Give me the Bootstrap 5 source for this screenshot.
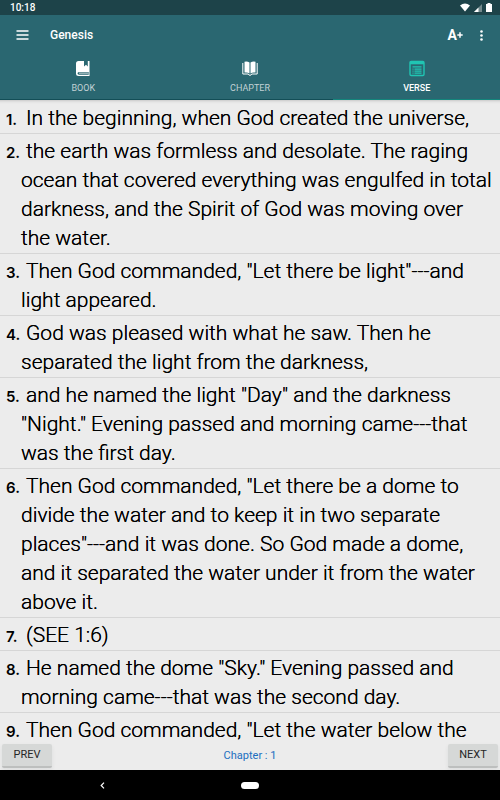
<!DOCTYPE html>
<html lang="en">
<head>
<meta charset="utf-8">
<meta name="viewport" content="width=device-width, initial-scale=1">
<title>Genesis</title>
<link href="https://cdn.jsdelivr.net/npm/bootstrap@5.3.0/dist/css/bootstrap.min.css" rel="stylesheet">
<style>
body { font-family: Roboto, sans-serif; background: #ececec; color: #000; }
svg { display: block; }
.status { height: 15px; background: #1d4349; font-size: 10px; line-height: 15px; padding: 0 8px 0 10px; }
.appbar { height: 40px; background: #2a6771; padding: 0 16px; }
.title { font-size: 12px; line-height: 16px; font-weight: 500; margin-left: 21px; }
.bigger { font-size: 14px; line-height: 16px; }
.tabs { background: #2a6771; }
.tab { height: 45px; padding: 5px 0 0; font-size: 9px; line-height: 12px; color: #c3d2d5; border-bottom: 1px solid #134e57; }
.tab svg { margin-bottom: 5px; }
.tab.active { color: #fff; font-weight: 500; border-color: #14857c; }
.verses { min-height: 0; padding-top: 1px; box-shadow: inset 0 4px 3px -3px #c4c4c4; }
.verse { font-size: 21px; font-weight: 300; line-height: 29px; text-shadow: 0 0 0 #000; padding: 3px 8px 0 21px; text-indent: -15px; border-bottom: 1px solid #d6d6d6; }
.verse:last-child { border: 0; }
.num { display: inline-block; width: 20px; text-indent: 0; text-shadow: none; font-family: Inter, sans-serif; font-size: 15px; line-height: 16px; font-weight: 600; }
.pager { height: 28px; padding: 2px 2px 2px; font-size: 11px; line-height: 16px; background: #ececec; }
.pagebtn { width: 50px; height: 24px; font-size: 11px; line-height: 16px; background: #d6d8d7; color: #262626; border: 0; border-bottom: 2px solid #bdbfbe; border-radius: 2px; }
.chapter { color: #1c6fc0; }
.sysnav { height: 30px; background: #000; }
.back { margin-right: 4px; }
.pill { width: 18px; height: 7px; background: #fff; }
</style>
<script src="https://cdn.jsdelivr.net/npm/bootstrap@5.3.0/dist/js/bootstrap.bundle.min.js"></script>
</head>
<body class="d-flex flex-column vh-100 overflow-hidden">
<div class="status d-flex justify-content-between align-items-center text-white flex-shrink-0">
  <span class="fw-medium">10:18</span>
  <span class="d-flex gap-1 align-items-center">
    <svg width="10" height="9" viewBox="0 0 10 9"><path d="M0 2.6Q5-1.6 10 2.6L5 8.6z" fill="#fff"/></svg>
    <svg width="8" height="8" viewBox="0 0 8 8"><path d="M0 8L8 0v8z" fill="#71898c"/><path d="M0 8L4.5 3.5V8z" fill="#fff"/></svg>
    <svg width="6" height="9" viewBox="0 0 6 9"><path d="M1.5 0h3v1H6v8H0V1h1.500z" fill="#fff"/></svg>
  </span>
</div>
<header class="appbar d-flex align-items-center text-white flex-shrink-0">
  <button class="btn p-0 border-0" aria-label="Menu"><svg width="13" height="10" viewBox="0 0 13 10"><path d="M.5 1h12M.5 5h12M.5 9h12" stroke="#fff" stroke-width="1.400"/></svg></button>
  <h1 class="title mb-0 flex-grow-1">Genesis</h1>
  <button class="btn bigger p-0 border-0 text-white fw-bold d-flex align-items-center" aria-label="Larger text"><span>A</span><svg width="6" height="6" viewBox="0 0 6 6"><path d="M3 .3v5.400M.3 3h5.400" stroke="#fff" stroke-width="1.500"/></svg></button>
  <button class="btn p-0 border-0 ms-3" aria-label="More options"><svg width="5" height="11" viewBox="0 0 5 11" fill="#fff"><circle cx="2.500" cy="1.500" r="1.300"/><circle cx="2.500" cy="5.500" r="1.300"/><circle cx="2.500" cy="9.500" r="1.300"/></svg></button>
</header>
<nav class="tabs row g-0 flex-shrink-0">
  <button class="tab col btn rounded-0 border-top-0 border-start-0 border-end-0 d-flex flex-column align-items-center">
    <svg width="16" height="17" viewBox="0 0 16 17"><path d="M3.500 1H9v5.500l2-1.700 1.800 1.700V1H14.500v11H4q-1.500.2-1.500 1.300T4 14.800h9.700V12h.8v4H3.700Q1 16 1 13.500v-10Q1 1 3.500 1z" fill="#fff"/><path d="M4 12.600h9.500v1H4z" fill="#d7e2e4"/></svg>BOOK</button>
  <button class="tab col btn rounded-0 border-top-0 border-start-0 border-end-0 d-flex flex-column align-items-center">
    <svg width="16" height="17" viewBox="0 0 16 17"><path d="M2.500 1.700Q5.500 1 7.500 2.600V13.500Q5.500 12 2.500 12.600zM13.500 1.700Q10.500 1 8.500 2.600V13.500q2-1.500 5-.9z" fill="#fff"/><path d="M.8 3v11h5.500q.4 1.300 1.700 1.300T9.700 14h5.500V3" fill="none" stroke="#fff" stroke-width="1"/></svg>CHAPTER</button>
  <button class="tab active col btn rounded-0 border-top-0 border-start-0 border-end-0 d-flex flex-column align-items-center" aria-current="page">
    <svg width="16" height="17" viewBox="0 0 16 17"><rect x="1" y="1.500" width="14" height="14" rx="1.200" fill="none" stroke="#20c5b3" stroke-width="1.400"/><path d="M1 1.500h14v2.800H1z" fill="#20c5b3"/><path d="M3.500 6.800h9M3.500 9.100h1M5.500 9.100h7M3.500 11.100h1M5.500 11.100h7M3.500 13.100h1M5.500 13.100h7" stroke="#20c5b3" stroke-width="1.200"/></svg>VERSE</button>
</nav>
<main class="verses flex-grow-1 overflow-hidden">
  <div class="verse"><span class="num">1.</span>In the beginning, when God created the universe,</div>
  <div class="verse"><span class="num">2.</span>the earth was formless and desolate. The raging ocean that covered everything was engulfed in total darkness, and the Spirit of God was moving over the water.</div>
  <div class="verse"><span class="num">3.</span>Then God commanded, "Let there be light"---and light appeared.</div>
  <div class="verse"><span class="num">4.</span>God was pleased with what he saw. Then he separated the light from the darkness,</div>
  <div class="verse"><span class="num">5.</span>and he named the light "Day" and the darkness "Night." Evening passed and morning came---that was the first day.</div>
  <div class="verse"><span class="num">6.</span>Then God commanded, "Let there be a dome to divide the water and to keep it in two separate places"---and it was done. So God made a dome, and it separated the water under it from the water above it.</div>
  <div class="verse"><span class="num">7.</span>(SEE 1:6)</div>
  <div class="verse"><span class="num">8.</span>He named the dome "Sky." Evening passed and morning came---that was the second day.</div>
  <div class="verse"><span class="num">9.</span>Then God commanded, "Let the water below the</div>
</main>
<div class="pager d-flex justify-content-between align-items-center flex-shrink-0">
  <button class="btn pagebtn p-0 shadow-sm">PREV</button>
  <span class="chapter">Chapter : 1</span>
  <button class="btn pagebtn p-0 shadow-sm">NEXT</button>
</div>
<footer class="sysnav row g-0 align-items-center flex-shrink-0">
  <div class="col-5 d-flex justify-content-center"><button class="btn back p-0 border-0 d-block" aria-label="Back"><svg width="5" height="7" viewBox="0 0 5 7"><path d="M4 .7L1.200 3.500 4 6.300" fill="none" stroke="#fff" stroke-width="1.200"/></svg></button></div>
  <div class="col-2 d-flex justify-content-center"><button class="btn pill p-0 border-0 rounded-pill" aria-label="Home"></button></div>
</footer>
</body>
</html>
